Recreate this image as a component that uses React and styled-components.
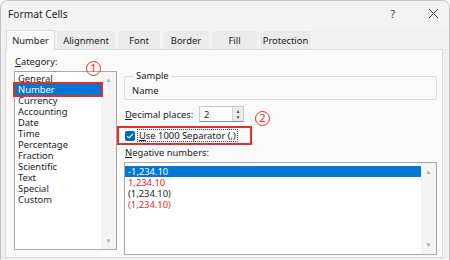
import React from "react";
import styled, { createGlobalStyle } from "styled-components";

const GlobalStyle = createGlobalStyle`
  html, body {
    margin: 0;
    padding: 0;
    background: #ffffff;
  }
  body {
    font-family: "Noto Sans", "Open Sans", sans-serif;
    font-size: 9.4px;
    color: #1b1b1b;
  }
`;

const categories = [
  "General",
  "Number",
  "Currency",
  "Accounting",
  "Date",
  "Time",
  "Percentage",
  "Fraction",
  "Scientific",
  "Text",
  "Special",
  "Custom",
];

const negatives = [
  { label: "-1,234.10", red: false },
  { label: "1,234.10", red: true },
  { label: "(1,234.10)", red: false },
  { label: "(1,234.10)", red: true },
];

const tabs = [
  { name: "Number", width: 49 },
  { name: "Alignment", width: 60 },
  { name: "Font", width: 44 },
  { name: "Border", width: 48 },
  { name: "Fill", width: 47 },
  { name: "Protection", width: 53 },
];

function App() {
  return (
    <>
      <GlobalStyle />
      <Window>
        <TitleBar>
          <Title>Format Cells</Title>
          <TitleButtons>
            <TitleButton>?</TitleButton>
            <TitleButton>
              <svg width="11" height="11" viewBox="0 0 11 11">
                <path d="M1 1L10 10M10 1L1 10" stroke="#333" strokeWidth="1" />
              </svg>
            </TitleButton>
          </TitleButtons>
        </TitleBar>

        <TabStrip>
          {tabs.map((t, i) => (
            <Tab key={t.name} $active={i === 0} $width={t.width}>
              {t.name}
            </Tab>
          ))}
        </TabStrip>

        <Panel>
          <Marker $left={80} $top={11}>1</Marker>
          <Marker $left={249} $top={61}>2</Marker>

          <LeftColumn>
            <Label>
              <u>C</u>ategory:
            </Label>
            <ListBox $height={179}>
              <ListItems $padTop={1}>
                {categories.map((c) => (
                  <ListRow
                    key={c}
                    $selected={c === "Number"}
                    $marked={c === "Number"}
                  >
                    {c}
                  </ListRow>
                ))}
              </ListItems>
              <ScrollBar>
                <Arrow>▲</Arrow>
                <Arrow>▼</Arrow>
              </ScrollBar>
            </ListBox>
          </LeftColumn>

          <RightColumn>
            <SampleGroup>
              <legend>Sample</legend>
              <SampleText>Name</SampleText>
            </SampleGroup>

            <DecimalRow>
              <DecimalLabel>
                <u>D</u>ecimal places:
              </DecimalLabel>
              <Spinner>
                <SpinnerValue>2</SpinnerValue>
                <SpinnerButtons>
                  <SpinArrow>▲</SpinArrow>
                  <SpinArrow>▼</SpinArrow>
                </SpinnerButtons>
              </Spinner>
            </DecimalRow>

            <CheckRow>
              <CheckBox>
                <svg width="8" height="8" viewBox="0 0 8 8">
                  <path
                    d="M1.2 4.2L3.2 6L6.8 1.8"
                    fill="none"
                    stroke="#fff"
                    strokeWidth="1.2"
                  />
                </svg>
              </CheckBox>
              <FocusText>
                <u>U</u>se 1000 Separator (,)
              </FocusText>
            </CheckRow>

            <Label $top={2}>
              <u>N</u>egative numbers:
            </Label>
            <ListBox $height={93}>
              <ListItems $padTop={3}>
                {negatives.map((n, i) => (
                  <ListRow key={i} $selected={i === 0} $red={n.red}>
                    {n.label}
                  </ListRow>
                ))}
              </ListItems>
              <ScrollBar $pad={5}>
                <Arrow>▲</Arrow>
                <Arrow>▼</Arrow>
              </ScrollBar>
            </ListBox>
          </RightColumn>
        </Panel>
      </Window>
    </>
  );
}

export default App;

const Window = styled.div`
  width: 450px;
  height: 260px;
  box-sizing: border-box;
  border: 1px solid #c2c2c2;
  border-bottom: none;
  border-radius: 8px 8px 0 0;
  background: #f0f0f0;
  display: flex;
  flex-direction: column;
  overflow: hidden;
`;

const TitleBar = styled.div`
  height: 31px;
  display: flex;
  align-items: center;
  justify-content: space-between;
  padding: 0 10px 0 7px;
  background: #f3f3f3;
`;

const Title = styled.span`
  font-size: 10.2px;
  color: #1a1a1a;
  margin-top: -4px;
`;

const TitleButtons = styled.div`
  display: flex;
  align-items: center;
  gap: 33px;
  margin-top: -4px;
`;

const TitleButton = styled.span`
  font-size: 10.5px;
  color: #333;
  display: flex;
  align-items: center;
`;

const TabStrip = styled.div`
  display: flex;
  height: 19px;
  padding-left: 5px;
  position: relative;
  z-index: 1;
`;

const Tab = styled.div`
  width: ${(p) => p.$width}px;
  box-sizing: border-box;
  display: flex;
  align-items: center;
  justify-content: center;
  color: #1a1a1a;
  background: ${(p) => (p.$active ? "#fafafa" : "#ebebeb")};
  border: 1px solid ${(p) => (p.$active ? "#dadada" : "#f6f6f6")};
  border-bottom: none;
  height: ${(p) => (p.$active ? "20px" : "19px")};
  margin-right: 1px;
`;

const Panel = styled.div`
  position: relative;
  margin: 0 6px 2px 4px;
  flex: 1;
  background: #fafafa;
  border: 1px solid #dadada;
  display: flex;
  gap: 7px;
  padding: 6px 5px 2px 8px;
`;

const Marker = styled.div`
  position: absolute;
  left: ${(p) => p.$left}px;
  top: ${(p) => p.$top}px;
  width: 15px;
  height: 15px;
  box-sizing: border-box;
  border: 1.5px solid #e0302a;
  border-radius: 50%;
  color: #e0302a;
  font-size: 11px;
  line-height: 12px;
  text-align: center;
  z-index: 2;
`;

const LeftColumn = styled.div`
  width: 103px;
  display: flex;
  flex-direction: column;
`;

const RightColumn = styled.div`
  flex: 1;
  display: flex;
  flex-direction: column;
  padding-top: 14px;
`;

const Label = styled.div`
  line-height: 12px;
  height: 12px;
  margin-top: ${(p) => p.$top || 0}px;
  margin-bottom: 3px;
  padding-left: 1px;
`;

const ListBox = styled.div`
  height: ${(p) => p.$height}px;
  box-sizing: border-box;
  background: #ffffff;
  border: 1px solid #a8a8a8;
  display: flex;
`;

const ListItems = styled.div`
  flex: 1;
  padding-top: ${(p) => p.$padTop}px;
`;

const ListRow = styled.div`
  height: 11px;
  line-height: 11px;
  padding-left: 3px;
  color: ${(p) => (p.$selected ? "#fff" : p.$red ? "#e8232a" : "#1b1b1b")};
  background: ${(p) => (p.$selected ? "#0078d7" : "transparent")};
  outline: ${(p) => (p.$marked ? "2px solid #e0302a" : "none")};
  outline-offset: 0;
  position: relative;
`;

const ScrollBar = styled.div`
  width: 15px;
  background: #f4f4f4;
  display: flex;
  flex-direction: column;
  justify-content: space-between;
  align-items: center;
  padding: ${(p) => p.$pad || 4}px 0 ${(p) => p.$pad || 4}px;
`;

const Arrow = styled.span`
  font-size: 6px;
  line-height: 8px;
  color: #a6a6a6;
`;

const SampleGroup = styled.fieldset`
  margin: 0;
  padding: 4px 7px 1px;
  border: 1px solid #dcdcdc;
  border-radius: 2px;
  height: 30px;
  box-sizing: border-box;

  legend {
    padding: 0 2px;
    margin-left: 2px;
    line-height: 12px;
  }
`;

const SampleText = styled.div`
  line-height: 12px;
  margin-top: -1px;
`;

const DecimalRow = styled.div`
  display: flex;
  align-items: center;
  margin-top: 6px;
  height: 16px;
  padding-left: 1px;
`;

const DecimalLabel = styled.span`
  width: 74px;
`;

const Spinner = styled.div`
  width: 45px;
  height: 16px;
  box-sizing: border-box;
  background: #fff;
  border: 1px solid #c8c8c8;
  border-bottom-color: #8a8a8a;
  display: flex;
  align-items: center;
`;

const SpinnerValue = styled.span`
  flex: 1;
  padding-left: 4px;
`;

const SpinnerButtons = styled.div`
  width: 10px;
  height: 14px;
  background: #ececec;
  border-left: 1px solid #d4d4d4;
  display: flex;
  flex-direction: column;
  align-items: center;
  justify-content: center;
`;

const SpinArrow = styled.span`
  font-size: 5px;
  line-height: 6px;
  color: #555;
`;

const CheckRow = styled.div`
  margin: 4px 0 0 -7px;
  width: 135px;
  height: 19px;
  box-sizing: border-box;
  border: 2px solid #e0302a;
  display: flex;
  align-items: center;
  padding-left: 6px;
  gap: 2px;
`;

const CheckBox = styled.span`
  width: 10px;
  height: 10px;
  border-radius: 2px;
  background: #0067c0;
  display: flex;
  align-items: center;
  justify-content: center;
`;

const FocusText = styled.span`
  border: 1px dotted #444;
  padding: 0 1px;
  line-height: 11px;
`;
